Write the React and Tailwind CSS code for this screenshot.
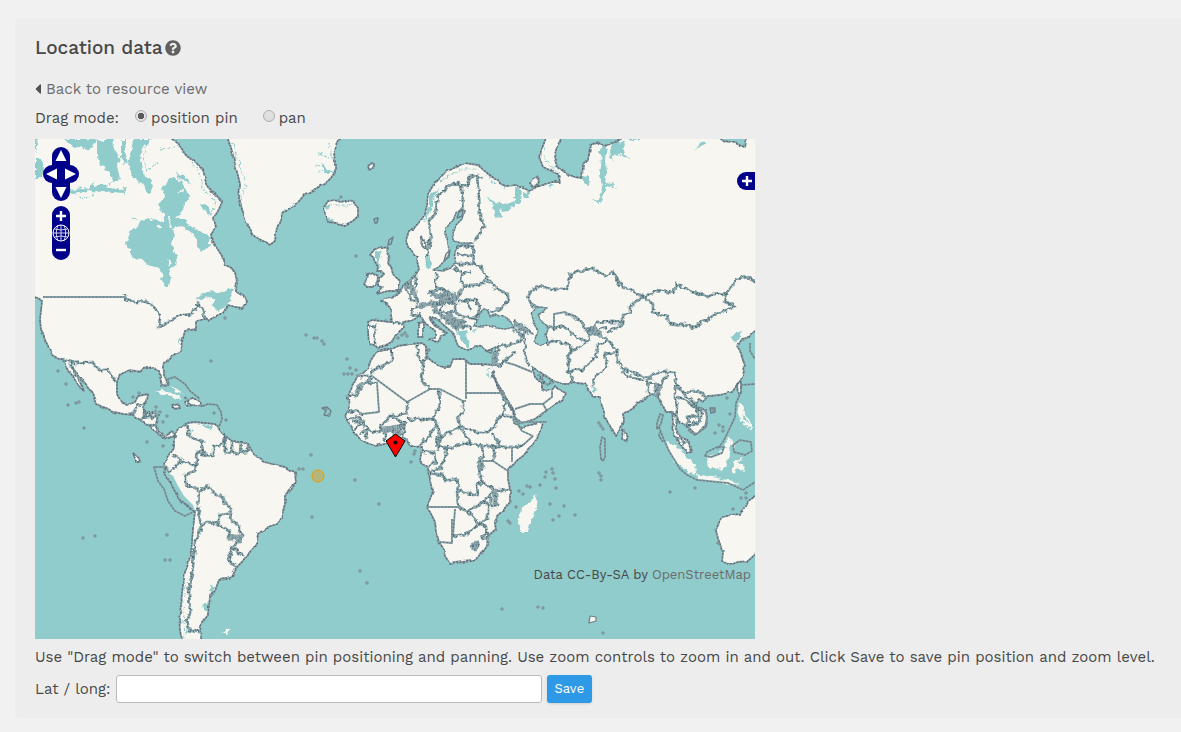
import { FaCaretLeft, FaQuestionCircle } from 'react-icons/fa';

const SEA = '#90cccb';
const LAND = '#f7f6f1';

// outlined land masses, in map pixels
const COASTS = [
    // north and central america
    'M-4 -4H133L137 0 143 4 147 10 150 15 153 18 159 21 163 26 168 31 170 38 171 45 173 48 180 55 187 62 185 68 183 72 178 80 180 88 176 97 177 102 180 107 184 112 187 117 190 127 195 129 200 133 202 143 201 152 208 155 211 164 207 169 200 168 193 166 188 174 181 177 173 182 167 176 169 180 161 182 161 190 150 192 147 203 145 212 137 217 131 223 129 227 129 235 132 243 131 247 128 246 126 243 124 232 118 228 108 230 105 233 95 231 85 235 82 243 82 255 86 263 92 266 100 263 103 257 113 255 112 262 108 268 109 273 115 273 124 276 122 285 123 292 129 297 133 295 137 292 141 298 135 299 127 298 120 293 114 286 105 281 98 276 88 275 75 272 62 265 58 254 50 244 40 232 36 226 38 231 41 236 45 242 49 252 44 248 40 241 35 235 31 228 28 222 22 219 17 216 13 207 10 201 6 190 5 180 7 162 -4 156Z',
    // south america
    'M139 298L143 290 152 284 160 283 170 284 180 285 188 295 197 302 207 302 213 305 217 312 223 319 230 323 237 325 250 328 255 331 260 333 261 343 256 351 250 357 250 365 248 372 246 380 242 386 230 390 223 395 222 403 218 410 213 415 207 423 202 428 197 438 191 440 184 441 180 452 175 457 174 466 173 475 167 483 165 492 167 504 148 504 145 492 144 480 146 466 147 453 150 433 154 423 156 413 158 390 160 372 152 367 143 358 137 347 130 335 129 323 135 314 139 308Z',
    // greenland, iceland
    'M192 -4L197 12 200 25 205 45 204 60 207 70 210 80 215 90 220 98 228 102 235 106 240 102 242 88 248 73 254 71 260 67 270 55 278 51 290 45 296 39 300 33 300 22 299 13 307 -4Z',
    'M289 68L293 62 298 61 305 63 312 61 318 62 323 70 323 77 318 82 310 86 301 84 293 83 290 75Z',
    // british isles
    'M335 116L340 110 347 109 353 108 352 112 355 117 353 123 356 128 358 135 365 142 363 149 363 152 353 152 342 155 348 148 344 147 344 140 349 135 346 132 342 132 343 128 340 123 338 118Z',
    'M332 135L337 133 343 137 342 145 337 148 332 148 329 145 331 141Z',
    // europe, asia and africa
    'M383 118L380 117 373 108 371 102 372 97 374 92 380 88 386 81 390 75 392 66 393 55 400 43 406 37 413 32 421 28 430 24 443 26 451 33 460 40 470 47 480 46 493 51 500 49 510 45 518 43 525 43 523 35 508 28 505 20 506 12 512 -4H528L522 8 519 18 522 27 533 36 540 38 547 39 548 25 553 20 555 10 557 4 563 3 570 7 580 3 590 -4H682L690 2 700 4 709 8 712 -4H724V188L713 199 707 200 702 208 706 214 710 227 708 236 705 243 697 253 685 256 673 257 668 263 664 260 660 267 665 269 671 273 672 280 670 288 660 295 652 287 643 282 640 288 643 294 647 298 655 304 657 313 653 314 647 308 640 297 637 290 638 285 637 273 630 273 626 265 623 258 617 255 608 260 600 267 588 275 589 281 588 287 580 297 575 288 571 280 568 270 566 264 565 258 558 258 554 251 550 245 542 244 533 245 526 245 520 242 513 239 505 233 497 228 500 238 507 245 507 250 513 252 517 251 520 247 523 250 530 253 528 260 517 268 508 274 500 280 487 284 482 280 478 271 470 257 461 242 459 232 457 234 463 248 470 262 478 272 480 284 487 288 507 283 505 292 502 300 495 309 488 317 480 323 473 330 473 340 475 350 475 363 470 370 462 377 460 383 461 390 453 397 452 407 446 416 438 422 427 423 415 425 410 417 408 409 404 403 401 394 400 383 396 375 392 368 395 360 398 352 396 342 393 332 390 327 385 322 387 307 381 308 375 307 372 300 368 298 362 300 350 305 340 307 332 304 325 300 320 294 315 287 311 277 314 271 313 257 317 248 322 238 332 230 336 221 342 212 350 210 357 210 363 207 375 205 387 204 391 207 391 213 392 218 398 223 403 225 409 228 415 228 418 220 428 220 435 225 446 225 458 226 459 216 461 208 452 212 446 208 440 207 433 212 423 207 418 194 412 189 405 183 397 178 395 177 397 181 400 185 406 190 412 194 406 196 405 200 402 204 394 201 400 199 400 192 396 188 391 185 388 181 385 175 382 179 375 182 368 183 369 188 365 192 360 197 357 203 350 207 343 209 339 206 334 205 333 194 333 183 337 181 347 182 357 183 356 176 355 170 350 164 345 162 350 160 357 159 363 153 373 143 380 137 384 130 382 122Z',
    // australia
    'M724 355L713 362 710 369 705 375 696 376 688 378 683 385 681 391 682 397 685 405 688 413 687 422 695 426 703 423 713 422 724 412Z',
    // islands
    'M150 262L158 259 165 263 167 267 160 266 152 267Z',
    'M137 267L143 265 144 269 138 270Z',
    'M588 291L593 298 591 302 587 300Z',
    'M383 184L388 183 388 198 383 198Z',
    'M702 246L706 243 706 253 703 256Z',
    'M333 27L337 24 339 25 338 29 334 31Z',
    'M497 40L501 38 504 41 503 47 498 48 495 44Z',
    'M98 314L105 319 106 323 101 323Z',
    'M387 97L390 104 391 110 386 107Z',
];

const BARE_LAND = [
    'M500 355L503 362 498 377 493 393 486 393 483 383 486 370 493 365Z',
    'M120 253L128 251 138 255 147 259 142 261 133 257Z',
    'M631 303L643 308 652 319 660 327 661 335 653 334 638 320Z',
    'M672 317L682 315 694 306 695 317 692 324 688 330 680 329 674 329Z',
    'M660 335L677 338 697 342 705 344 697 346 683 343 662 340Z',
    'M698 322L708 319 703 324 709 328 706 333 702 328 700 335 698 332Z',
    'M704 262L708 268 707 278 714 285 718 284 718 292 711 287 706 281 702 275Z',
    'M688 308L694 298 698 303 699 308Z',
    'M186 492L196 490 192 495Z',
    'M133 246L137 246 140 252 149 255 145 252 139 248Z',
];

// gulfs, bays and sounds without an outline
const WATERS = [
    'M113 80L105 83 95 94 91 104 95 110 98 119 107 120 113 126 124 129 127 133 126 140 131 147 134 147 136 139 133 131 140 126 142 118 139 112 137 103 139 94 137 89 148 87 158 95 162 101 162 108 167 113 173 109 175 98 165 92 153 86 149 80 140 79 148 72 149 66 154 59 149 46 140 38 134 39 131 46 127 48 129 58 122 66 130 75 128 82 121 81 117 78Z',
    'M28 0H61L58 9 51 12 48 7 40 9 35 5Z',
    'M62 2L80 0 78 8 85 20 82 27 85 40 79 44 75 33 65 26 62 15Z',
    'M98 0H116L107 9 105 20 108 35 116 40 118 47 114 56 108 45 101 42 93 26 96 12Z',
    'M34 51L47 49 54 50 58 43 60 48 67 46 75 49 88 51 88 54 77 53 68 51 58 53 52 52 38 54Z',
    'M86 0H92L90 14 93 24 89 25 86 17ZM88 49L92 48 89 57Z',
    'M0 20L6 20 9 30 7 37 0 41ZM0 0H3L1 12 0 14Z',
    'M165 65L171 66 178 75 174 77ZM140 35L150 36 155 45 147 42Z',
    'M160 162L168 154 177 152 188 154 194 150 200 149 196 158 192 167 183 172 177 166 180 161 172 158Z',
    'M33 224L38 226 40 234 35 230ZM143 198L146 200 144 206Z',
    'M163 285L178 286 176 290 168 288ZM155 289L158 292 156 294Z',
    'M175 446L180 448 178 452 175 451ZM168 465L174 462V471L169 471Z',
    // white sea, ob gulf
    'M453 59L460 63 472 65 480 62 480 68 473 71 468 72 465 69 467 79 460 77 458 68Z',
    'M480 47L486 50 485 65 480 63ZM488 54L496 50 494 59 489 59ZM512 46L519 46 515 49Z',
    'M547 38L553 37 555 49 550 45Z',
    'M568 8L573 9 570 20 571 35 570 46 578 43 581 50 576 46 571 49 565 64 557 62 564 60 567 48 565 35 567 20 564 14Z',
    'M577 4L590 3 588 14 596 20 589 18 585 15 577 17 578 23 574 18Z',
    'M592 0H608L596 3ZM660 10L666 3 672 4 664 8Z',
    'M390 116L394 114 396 126 394 130 391 127Z',
    'M398 52L404 50 399 60 396 70 392 80 388 84 394 68 394 58Z',
    'M289 78L296 80 299 83 293 83ZM289 67L295 66 291 71ZM340 113L347 112 343 122 345 129 340 128Z',
    'M287 25L293 30 299 34 290 34Z',
    'M422 193L427 191 433 193 431 199 435 206 433 210 428 203Z',
    'M407 191L411 193 410 196 406 194ZM436 191L443 190 440 193Z',
    'M695 199L704 192 707 191 705 199 699 204ZM557 247L562 251 558 253Z',
];

// baltic, black sea, caspian and the peruvian zone
const ENCLOSED_SEAS = [
    'M411 100L411 90 415 84 420 80 422 74 426 70 429 72 427 80 420 87 417 94 418 101 424 104 438 104 424 107 421 113 419 125 416 129 408 132 398 131 404 128 409 122 414 114Z',
    'M440 187L443 180 445 173 449 170 452 171 455 177 460 175 464 177 470 179 476 183 479 188 470 190 462 189 454 187 447 188Z',
    'M496 174L500 169 505 168 511 169 509 173 503 174 506 181 512 190 510 196 512 203 505 206 500 202 501 196 504 192 500 186Z',
];

const PERU_WATERS = 'M129 331L138 337 143 347 149 357 158 366 160 372 152 367 143 358 137 347Z';

const FINE_BORDERS = [
    'M8 158H90M431 222V260M431 254H467M337 237L372 263 395 250M342 243L344 273 327 275M392 368H423M395 250H405L428 262H431M519 190V175L530 173M420 370L418 397M417 380V404L405 403M477 308V323M447 322H458L473 332',
    'M160 372L150 377 140 372 133 362 129 350 123 342 119 328H129',
    'M125 247L134 246 133 240 140 238 150 245 155 252 165 260',
    'M168 267L173 265 182 266 186 273 187 280 184 288M480 285L490 283 512 283',
    'M480 270L495 265H508L512 272M508 265L517 258V252M470 223L480 226 497 233M480 281L487 292 498 297M498 297L487 307',
    'M706 253L701 264 700 278 692 295 688 303 682 310M624 288L629 301 634 312 645 330 652 336 662 341 693 344 708 351 720 343M715 204V212L720 220M706 246L720 245M698 306L699 313 710 316 717 312 716 303 705 301Z',
    'M670 317L672 313 682 308 689 308 687 314 676 318Z',
    'M622 290L626 285 628 276 625 275 622 284Z',
    'M628 303L624 297 625 293',
    'M566 320L565 308 567 298 570 300 570 318 568 322Z',
    'M671 270L672 278 670 289 660 296 653 291',
];

const ROUGH_BORDERS = [
    // americas
    'M90 156V160L95 161 100 163 110 162 120 169 125 177 124 188 130 185 135 182 143 177 157 175 163 165 167 168 170 180',
    'M27 220L40 224 57 223 65 231 73 231 80 241 83 243M38 233L50 243',
    'M98 275L102 267 111 264M108 272L115 275 124 272M105 280L113 278 123 277M115 285L122 287M110 270V280M150 258L156 268',
    'M152 284L154 297 167 303 168 315 177 317 180 308 188 305 190 293',
    'M190 295L190 313 203 314 212 313 215 307M197 302V313M206 303L205 313',
    'M168 313H163L161 327 148 322 136 315M146 323L135 333 130 328M161 327L160 332 151 335 151 345 160 349 164 352 174 347 177 353 188 358 190 365 197 370 195 380 202 385 207 397 204 403 197 408 208 417',
    'M164 352L163 367 166 387 160 403 158 427 154 453 155 473 152 483 155 492 165 493',
    'M166 387L172 383 182 384 195 393 193 400 206 399M182 384L185 376 195 375M197 408L193 422 201 427',
    // africa
    'M357 212V222L337 232V237H323M337 240L327 245 320 257H312M327 245L342 243M327 275L320 272 312 273',
    'M395 250L387 243 388 225 382 215 383 205M388 225L392 218M372 263V275L355 277 347 285M372 280H398L405 267 404 250',
    'M370 282L368 298M398 280L402 285 395 295 385 307M428 262V273L423 278 425 288 405 298 403 285M405 298L403 307 412 310 427 305 437 305 425 288',
    'M427 288L440 293 453 293 460 287 465 277 480 277M467 254L472 263 466 277M437 305L450 307 467 308 457 295M482 287L480 278M487 307L475 308 458 308 460 317 457 322',
    'M447 308L448 317 443 323 445 337 448 343 442 345 443 357 423 352 422 340 410 342 408 336 395 334M413 307L410 318 405 330 395 332M387 313H400L401 323 393 328M402 297L403 312',
    'M422 352L423 368 433 372 445 365 455 357 458 350 448 343M458 352L475 350M457 347L462 367 457 368 455 358M433 372L445 385 453 380 453 365 445 363M418 397L432 395 445 385M445 385L451 387 452 397',
    'M437 407L441 403 444 406 440 411ZM449 396L453 395 452 400 448 399Z',
    'M340 293L350 292V303M355 277L367 283 365 293M347 285L345 291 368 287M358 290V304M362 290V303M314 280L325 278 332 290 340 293M320 290L326 284M325 296L332 290 331 300M316 283H326',
    // europe
    'M392 117L396 97 394 82 400 75 403 57 413 48 422 43 425 47 433 47 435 38 442 36 448 40M425 47L428 58 427 72M442 38L444 57 445 78 449 87 440 101',
    'M422 107H438L439 125 420 125M423 115L439 118M437 123L445 128 452 138 448 145 427 147 427 135 437 132M453 141L462 150 473 155 473 162 465 170 455 173',
    'M401 133V147L415 153 423 158 428 147M381 137L380 153 382 163M395 153L403 150 415 155 408 160 397 157ZM377 170L388 167 408 165 423 160',
    'M408 165L420 163V172L405 173ZM423 163L440 160 445 172 440 180 425 177 420 172M425 180L427 188 437 188M357 183L368 185M340 187V205M334 186L341 187M427 133L418 129',
    'M378 168L377 176 383 177M382 163L376 160 370 148M430 161L436 171M441 161L445 167',
    // asia
    'M498 167L493 160 495 153 505 147 517 150 532 150 535 135 557 129 570 137 578 133 587 148 598 152 608 158 623 151 638 154 642 145 657 153 673 157 692 154 702 140 713 138 721 143',
    'M692 154L690 163 700 167 677 177 660 188 635 184 632 178 618 173 618 165 608 158 595 167 595 173 588 177 588 185 573 193',
    'M498 167L503 168M588 183H562L560 188 550 190 547 182 530 173M512 187L519 190 528 187 540 197 552 203 537 212 533 205 518 202 512 205',
    'M535 210L533 232 548 230 560 218 563 205 573 202M552 203L558 192 572 188M533 232L538 238 535 244M558 247L560 238 572 228 570 215 582 213',
    'M562 193L575 203 582 212 583 222 590 231 610 238 630 232 640 233 642 247 647 253 662 252 672 257M587 232L593 237 610 242M612 238L613 253 623 257 625 247 613 243M625 247L632 235',
    'M640 247V260L643 267 640 275 642 283M642 257L653 263 663 270 663 283 653 287 652 278 662 277M647 253L658 263 667 273 665 283M643 298L650 305',
    'M480 182L487 188 490 200V217L495 228M462 228L480 213M463 207L480 205 487 200M463 215L463 207M478 183L490 187 497 195M478 188L488 198 492 192 484 190M502 236L512 246 519 242',
];

// heavily overlapping borders
const DENSE = [
    'M370 146L378 150 378 156M380 168L395 164 402 166M398 170L408 178 418 186 424 190M404 164L415 160 424 157M412 174L420 182 430 184M554 190L566 196M480 184L492 194',
    'M397 155L404 157 414 156M372 144L378 144M552 193L562 188M332 240H336M328 243L322 254M610 239L618 238',
    'M420 188L430 181M620 244L624 256M445 322L447 331M459 350L461 366M460 212L460 228M193 399L206 398M437 407L443 406M346 291H356M361 290L366 296',
];

const ISLETS = [
    [23, 232], [31, 245], [33, 266], [41, 264], [44, 263], [49, 289], [112, 303], [128, 307], [190, 179], [176, 222], [179, 274], [191, 281],
    [98, 258], [104, 254], [121, 268], [132, 277], [128, 283], [125, 273], [132, 396], [130, 421], [135, 421], [48, 399], [60, 397],
    [271, 196], [279, 199], [282, 199], [287, 202], [289, 205], [312, 220], [315, 229], [309, 235], [313, 235], [317, 235], [321, 231], [291, 270], [294, 276], [276, 316],
    [264, 330], [268, 330], [277, 378], [321, 117], [306, 58], [344, 365], [320, 341], [376, 323], [379, 315], [380, 312], [325, 432], [332, 444],
    [467, 470], [503, 468], [508, 469], [484, 352], [488, 355], [492, 347], [495, 348], [505, 346], [511, 333], [510, 338], [517, 330],
    [518, 334], [520, 340], [521, 349], [515, 365], [529, 367], [524, 377], [518, 381], [540, 376], [473, 382], [475, 384], [481, 368],
    [564, 284], [566, 287], [568, 290], [564, 334], [566, 337], [566, 341], [635, 353], [660, 349], [678, 271], [692, 259], [684, 286],
    [688, 288], [688, 292], [680, 294], [695, 275], [706, 359], [711, 354], [711, 359], [698, 370], [683, 404], [241, 503], [568, 494],
    [367, 196], [370, 194], [363, 199], [372, 197], [394, 211],
];

const CONTROL = 'flex size-[18px] items-center justify-center bg-[#00008b] text-white';

function Triangle({ d }) {
    return (
        <svg viewBox="0 0 18 18" className="size-[18px]" aria-hidden="true">
            <path d={d} fill="currentColor" />
        </svg>
    );
}

function Sign({ d }) {
    return (
        <svg viewBox="0 0 18 18" className="size-[18px]" aria-hidden="true">
            <path d={d} stroke="currentColor" strokeWidth="2.4" />
        </svg>
    );
}

function WorldMap() {
    return (
        <svg viewBox="0 0 720 500" className="block w-full" role="img" aria-label="World map">
            <defs>
                <filter id="rough" x="0" y="0" width="720" height="500" filterUnits="userSpaceOnUse" colorInterpolationFilters="sRGB">
                    <feTurbulence type="fractalNoise" baseFrequency="0.2" numOctaves="2" seed="4" />
                    <feDisplacementMap in="SourceGraphic" scale="6" xChannelSelector="R" yChannelSelector="G" />
                </filter>
                <filter id="wobble" x="0" y="0" width="720" height="500" filterUnits="userSpaceOnUse" colorInterpolationFilters="sRGB">
                    <feTurbulence type="fractalNoise" baseFrequency="0.12" numOctaves="1" seed="9" />
                    <feDisplacementMap in="SourceGraphic" scale="4" xChannelSelector="R" yChannelSelector="G" />
                </filter>
            </defs>
            <rect width="720" height="500" fill={SEA} />
            <g filter="url(#wobble)">
                <path d={COASTS.join('')} fill={LAND} />
            </g>
            <path d={PERU_WATERS} fill={SEA} />
            <g filter="url(#rough)">
                <path d={BARE_LAND.join('')} fill={LAND} />
                <path d={WATERS.join('')} fill={SEA} />
            </g>
            {/* ragged fjords and lakes */}
            <g fill="none" stroke={SEA} strokeWidth="1.2" strokeDasharray="3 1 1 2" filter="url(#rough)">
                <path d="M143 6L158 24 166 38 168 50 181 62 177 75M198 5L206 30 211 45 206 62M294 4L298 25M246 74L268 60M405 42L425 30 442 30M150 440L148 465 150 498M156 470L151 495M509 8L510 22 525 34M293 68L300 66 318 66" />
                <path d="M452 36L460 45 470 49M342 113L347 120M460 224L452 232 455 240M280 27L290 29M283 14L296 20M283 32L289 33" />
                <path d="M112 4L108 20 112 32 124 22M125 10L140 8M38 54L52 60 60 52M73 46L82 36M98 78L106 84" />
            </g>
            <g fill="none" stroke={LAND} strokeWidth="2" filter="url(#rough)">
                <path d="M118 49L125 46M108 72L118 82M134 77L136 88M142 53L148 51M133 121L136 126M122 88H126M706 270L716 285M702 328L710 332" />
            </g>
            <g fill="none" strokeLinejoin="round">
                <g filter="url(#wobble)">
                    <path d={COASTS.join('')} stroke="#8b9ca3" strokeWidth="1.8" />
                    <path d={COASTS.join('')} stroke="#5a6f7b" strokeWidth="1.4" strokeDasharray="1.8 1.6" />
                    <path d={ENCLOSED_SEAS.join('')} fill={SEA} stroke="#8ba0a6" strokeWidth="1.6" />
                    <path d={ENCLOSED_SEAS.join('')} stroke="#5a737e" strokeWidth="1.2" strokeDasharray="1.6 1.6" />
                </g>
                <path d={FINE_BORDERS.join('')} stroke="#8ba3a8" strokeWidth="1.9" />
                <path d={FINE_BORDERS.join('')} stroke="#627d86" strokeWidth="1.1" strokeDasharray="2 1.5" />
                <g filter="url(#rough)">
                    <path d={ROUGH_BORDERS.join('')} stroke="#8fa8ad" strokeWidth="2.8" />
                    <path d={ROUGH_BORDERS.join('')} stroke="#4f7079" strokeWidth="1.8" strokeDasharray="1.4 1.8" />
                    <path d={DENSE.join('')} stroke="#90a8ad" strokeWidth="5.5" />
                    <path d={DENSE.join('')} stroke="#557780" strokeWidth="3" strokeDasharray="1 2.6" />
                </g>
                <path
                    d="M354 101L358 98 356 105 353 106ZM411 115L415 111 414 118 409 122ZM424 73L428 71 427 77 422 79ZM339 80L343 79 342 84 340 84ZM287 269L292 268 296 272 294 277 289 276 291 272ZM675 269L680 269 680 273 676 274Z"
                    stroke="#6d7f8a"
                    strokeWidth="1.4"
                />
                <path d="M555 477L561 478 561 482 554 484Z" fill={LAND} stroke="#6d7f8a" strokeWidth="1.2" />
                <path d="M451 212L457 211 456 214Z" fill={LAND} stroke="#6d7f8a" strokeWidth="1.6" />
                {ISLETS.map(([x, y]) => (
                    <circle key={`${x}-${y}`} cx={x} cy={y} r="1.2" fill="#a9c2c2" stroke="#6d7f8a" strokeWidth="0.9" />
                ))}
            </g>
            <circle cx="283" cy="337" r="6" fill="#ee9900" fillOpacity="0.4" stroke="#ee9900" />
            <path d="M360.500 295L370 302 360.500 318 351 302Z" fill="#f00" stroke="#000" />
            <circle cx="360.500" cy="303.500" r="2" />
        </svg>
    );
}

function MapControls() {
    return (
        <>
            <div className="absolute top-2 left-2 flex flex-col items-center">
                <button type="button" aria-label="Pan up" className={`${CONTROL} rounded-t-full`}>
                    <Triangle d="M9 3L14.500 14H3.500Z" />
                </button>
                <div className="flex">
                    <button type="button" aria-label="Pan left" className={`${CONTROL} rounded-l-full`}>
                        <Triangle d="M3 9L14 3.500V14.500Z" />
                    </button>
                    <button type="button" aria-label="Pan right" className={`${CONTROL} rounded-r-full`}>
                        <Triangle d="M15 9L4 3.500V14.500Z" />
                    </button>
                </div>
                <button type="button" aria-label="Pan down" className={`${CONTROL} rounded-b-full`}>
                    <Triangle d="M9 15L14.500 4H3.500Z" />
                </button>
                <div className="mt-[5px]">
                    <button type="button" aria-label="Zoom in" className={`${CONTROL} rounded-t-full`}>
                        <Sign d="M4 10H14M9 5V15" />
                    </button>
                    <button type="button" aria-label="Zoom to world" className={CONTROL}>
                        <svg viewBox="0 0 18 18" className="size-[18px]" fill="none" stroke="currentColor" aria-hidden="true">
                            <circle cx="9" cy="9" r="8" />
                            <path d="M9 1V17M1 9H17M2.500 5Q9 7 15.500 5M2.500 13Q9 11 15.500 13M6 1.500Q2.500 9 6 16.500M12 1.500Q15.500 9 12 16.500" strokeWidth="0.8" />
                        </svg>
                    </button>
                    <button type="button" aria-label="Zoom out" className={`${CONTROL} rounded-b-full`}>
                        <Sign d="M4 8H14" />
                    </button>
                </div>
            </div>
            <button type="button" aria-label="Show layers" className={`${CONTROL} absolute top-[33px] right-0 rounded-l-full`}>
                <Sign d="M5 9H15M10 4V14" />
            </button>
        </>
    );
}

function DragOption({ label, value, defaultChecked }) {
    return (
        <label className="flex items-center gap-1">
            <input
                type="radio"
                name="drag-mode"
                value={value}
                defaultChecked={defaultChecked}
                className="mb-1 size-3 appearance-none rounded-full border border-[#adadad] bg-linear-to-b from-[#e3e3e3] to-[#dcdcdc] checked:bg-[radial-gradient(circle,#5a5a5a_0_3px,#e2e2e2_3px)]"
            />
            {label}
        </label>
    );
}

export default function App() {
    return (
        <div className="min-h-screen bg-[#f1f1f1] pt-[19px] pb-3.5 pl-[15px] font-['Work_Sans',Inter,sans-serif] text-[15px] text-[#484848]">
            <main className="rounded-l bg-[#ededed] pt-[15px] pb-[15px] pl-5">
                <h1 className="flex h-7 items-center gap-0.5 text-[19px] font-medium text-[#484848]">
                    Location data
                    <a href="#help" aria-label="Help" className="text-[#606060]">
                        <FaQuestionCircle className="size-4" />
                    </a>
                </h1>
                <a href="#resource" className="mt-3 flex h-[30px] items-center gap-1 text-[#6c6c6c]">
                    <FaCaretLeft className="-ml-px h-4 w-2 text-[#505050]" />
                    Back to resource view
                </a>
                <div className="flex h-7 items-center">
                    <span className="mr-4">Drag mode:</span>
                    <DragOption label="position pin" value="pin" defaultChecked />
                    <span className="w-[25px]" />
                    <DragOption label="pan" value="pan" />
                </div>
                <div className="relative mt-[7px] w-full max-w-[720px] overflow-hidden">
                    <WorldMap />
                    <MapControls />
                    <p className="absolute right-1 bottom-[55px] text-[13px]">
                        Data CC-By-SA by{' '}
                        <a href="#osm" className="text-[#6c6c6c]">OpenStreetMap</a>
                    </p>
                </div>
                <p className="flex h-9 items-center">
                    Use "Drag mode" to switch between pin positioning and panning. Use zoom controls to zoom in and out. Click Save to save pin position and zoom level.
                </p>
                <form className="flex h-7 items-center" onSubmit={(e) => e.preventDefault()}>
                    <label htmlFor="latlong" className="mr-[5px]">Lat / long:</label>
                    <input
                        id="latlong"
                        type="text"
                        className="h-7 w-full max-w-[426px] rounded-[3px] border border-[#bbb] bg-white px-2"
                    />
                    <button type="submit" className="ml-[5px] h-7 rounded-[3px] bg-[#2e99e6] px-2 text-[13px] text-white shadow-sm">
                        Save
                    </button>
                </form>
            </main>
        </div>
    );
}
